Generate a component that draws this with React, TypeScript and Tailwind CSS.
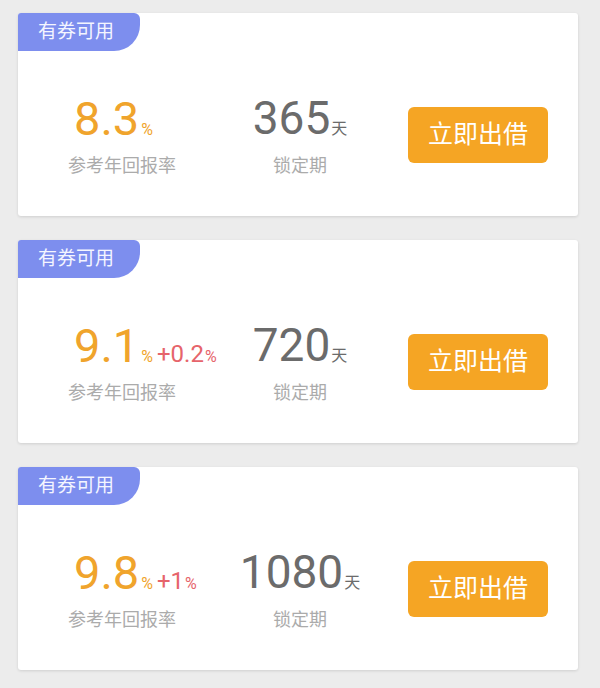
const font = { fontFamily: 'Roboto, "Noto Sans CJK SC", sans-serif' }

type Item = { rate: string; bonus?: string; days: string }

const items: Item[] = [
  { rate: "8.3", days: "365" },
  { rate: "9.1", bonus: "+0.2", days: "720" },
  { rate: "9.8", bonus: "+1", days: "1080" },
]

function Card({ item }: { item: Item }) {
  return (
    <div className="bg-white rounded-[3px] shadow-[0_1px_3px_rgba(0,0,0,0.12)] h-[203px] flex flex-col">
      <div className="w-[122px] h-[38px] bg-[#7d8eee] rounded-tl-[3px] rounded-tr-[6px] rounded-br-[26px] flex items-center pl-[20px] text-[19px] text-[#f4f5ff]">
        有券可用
      </div>
      <div className="flex-1 flex items-center pt-[3px] pl-[50px] pr-[30px]">
        <div className="w-[160px] flex flex-col">
          <div className="pl-[6px] flex items-baseline h-[48px] leading-none">
            <span className="text-[47px] text-[#f0a42c]">{item.rate}</span>
            <span className="text-[16px] text-[#f0a42c] ml-[2px]">%</span>
            {item.bonus && (
              <>
                <span className="text-[24px] text-[#e6646b] ml-[4px]">{item.bonus}</span>
                <span className="text-[16px] text-[#e6646b] ml-[1px]">%</span>
              </>
            )}
          </div>
          <div className="mt-[14px] text-[18px] leading-[18px] text-[#ababab]">参考年回报率</div>
        </div>
        <div className="w-[144px] flex flex-col items-center">
          <div className="flex items-baseline h-[48px] leading-none">
            <span className="text-[46px] text-[#6b6b6b]">{item.days}</span>
            <span className="text-[16px] text-[#6b6b6b] ml-[1px]">天</span>
          </div>
          <div className="mt-[14px] text-[18px] leading-[18px] text-[#ababab]">锁定期</div>
        </div>
        <button className="ml-auto w-[140px] h-[56px] rounded-[6px] bg-[#f5a524] text-white text-[25px] flex items-center justify-center">
          立即出借
        </button>
      </div>
    </div>
  )
}

export default function App() {
  return (
    <div style={font} className="w-[600px] h-[688px] bg-[#ececec] px-[18px] pt-[13px] flex flex-col gap-[24px] pr-[22px]">
      {items.map((it, i) => (
        <Card key={i} item={it} />
      ))}
    </div>
  )
}
